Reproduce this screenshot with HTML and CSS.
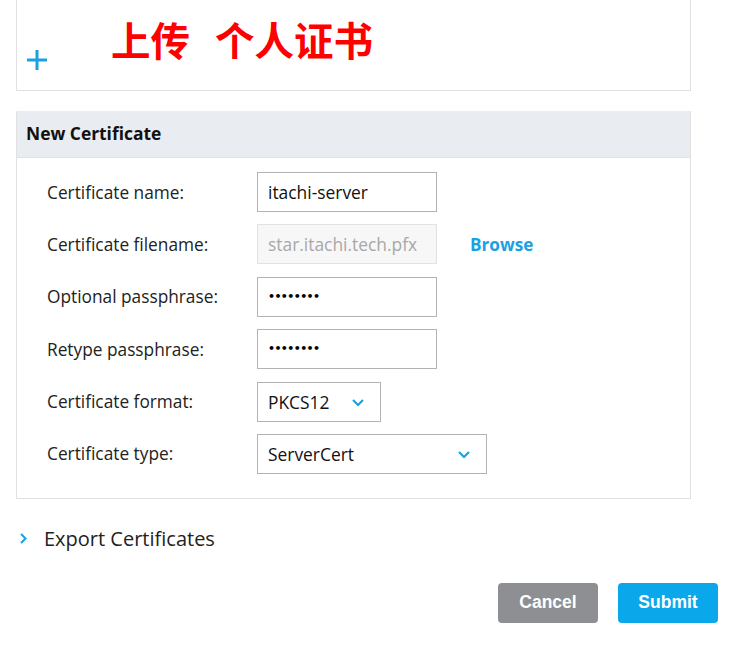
FILE: index.html
```html
<!DOCTYPE html>
<html>
<head>
<meta charset="utf-8">
<link rel="stylesheet" href="styles.css">
</head>
<body>
<div class="top-card">
  <svg class="plus" width="22" height="22" viewBox="0 0 22 22"><path d="M11 1v20M1 11h20" stroke="#1ba1e2" stroke-width="3" fill="none"/></svg>
  <div class="note"><span>上传</span><span class="gap">个人证书</span></div>
</div>

<div class="panel">
  <div class="panel-head">New Certificate</div>
  <div class="panel-body">
    <div class="row">
      <div class="label">Certificate name:</div>
      <div class="field w180">itachi-server</div>
    </div>
    <div class="row">
      <div class="label">Certificate filename:</div>
      <div class="field w180 disabled">star.itachi.tech.pfx</div>
      <div class="browse">Browse</div>
    </div>
    <div class="row">
      <div class="label">Optional passphrase:</div>
      <div class="field w180 dots">••••••••</div>
    </div>
    <div class="row">
      <div class="label">Retype passphrase:</div>
      <div class="field w180 dots">••••••••</div>
    </div>
    <div class="row">
      <div class="label">Certificate format:</div>
      <div class="field select w124"><span>PKCS12</span>
        <svg class="chev" width="14" height="9" viewBox="0 0 14 9"><path d="M2 2l5 5 5-5" stroke="#1ba1e2" stroke-width="2.2" fill="none"/></svg>
      </div>
    </div>
    <div class="row">
      <div class="label">Certificate type:</div>
      <div class="field select w230"><span>ServerCert</span>
        <svg class="chev" width="14" height="9" viewBox="0 0 14 9"><path d="M2 2l5 5 5-5" stroke="#1ba1e2" stroke-width="2.2" fill="none"/></svg>
      </div>
    </div>
  </div>
</div>

<div class="export">
  <svg width="8" height="13" viewBox="0 0 8 13"><path d="M2 2l4.5 4.5L2 11" stroke="#1ba1e2" stroke-width="2" fill="none"/></svg>
  <span>Export Certificates</span>
</div>

<div class="actions">
  <button class="btn cancel">Cancel</button>
  <button class="btn submit">Submit</button>
</div>
</body>
</html>
```

FILE: styles.css
```css
html, body { margin: 0; padding: 0; background: #fff; }
body { font-family: "Open Sans", "Noto Sans", sans-serif; color: #1e1e1e; width: 734px; height: 660px; overflow: hidden; }

.top-card {
  position: relative;
  margin-left: 16px;
  width: 673px;
  height: 90px;
  border: 1px solid #e1e1e1;
  border-top: none;
  box-sizing: content-box;
}
.plus { display: block; position: absolute; left: 9px; top: 49px; }
.note {
  position: absolute; left: 94px; top: 14px;
  font-family: "Noto Sans CJK SC", sans-serif;
  font-weight: 700; font-size: 39.5px; line-height: 50px;
  color: #ff0000; white-space: nowrap;
}
.note .gap { margin-left: 25px; }

.panel {
  margin: 20px 0 0 16px;
  width: 673px;
  border: 1px solid #e1e1e1;
  border-top: none;
}
.panel-head {
  background: #e9ecf0;
  height: 46px;
  border-bottom: 1px solid #dfe2e6;
  padding-left: 9px;
  font-weight: 700;
  font-size: 17.4px;
  line-height: 45px;
  color: #111;
}
.panel-body {
  padding: 14px 0 24px 30px;
  display: flex; flex-direction: column; gap: 12.4px;
}
.row { display: flex; align-items: center; height: 40px; }
.label { width: 210px; font-size: 17.3px; color: #222; }
.field {
  box-sizing: border-box; height: 40px;
  border: 1px solid #b3b3b3;
  padding-left: 10px;
  font-size: 17.4px; line-height: 38px; color: #111;
  display: flex; align-items: center;
}
.w180 { width: 180px; }
.w124 { width: 124px; }
.w230 { width: 230px; }
.disabled { background: #f7f7f7; border-color: #e2e2e2; color: #a8a8a8; }
.dots { font-size: 11px; letter-spacing: -0.6px; font-weight: 700; color: #000; font-family: "DejaVu Sans", sans-serif; }
.select { justify-content: space-between; padding-right: 15px; }
.chev { display: block; margin-top: 1px; }
.browse { margin-left: 33px; color: #1ba1e2; font-weight: 700; font-size: 17.2px; }

.export {
  display: flex; align-items: center;
  margin: 26px 0 0 19px;
  height: 28px;
}
.export svg { display: block; }
.export span { margin-left: 17px; font-size: 20px; color: #222; }

.actions {
  display: flex; justify-content: flex-end; gap: 20px;
  margin-top: 30px; padding-right: 16px;
}
.btn {
  width: 100px; height: 40px; border: none; border-radius: 4px;
  color: #fff; font-family: "Liberation Sans", Arial, sans-serif;
  font-weight: 700; font-size: 17.5px; padding: 0;
}
.cancel { background: #8e8f93; }
.submit { background: #0aa7ea; }
```
